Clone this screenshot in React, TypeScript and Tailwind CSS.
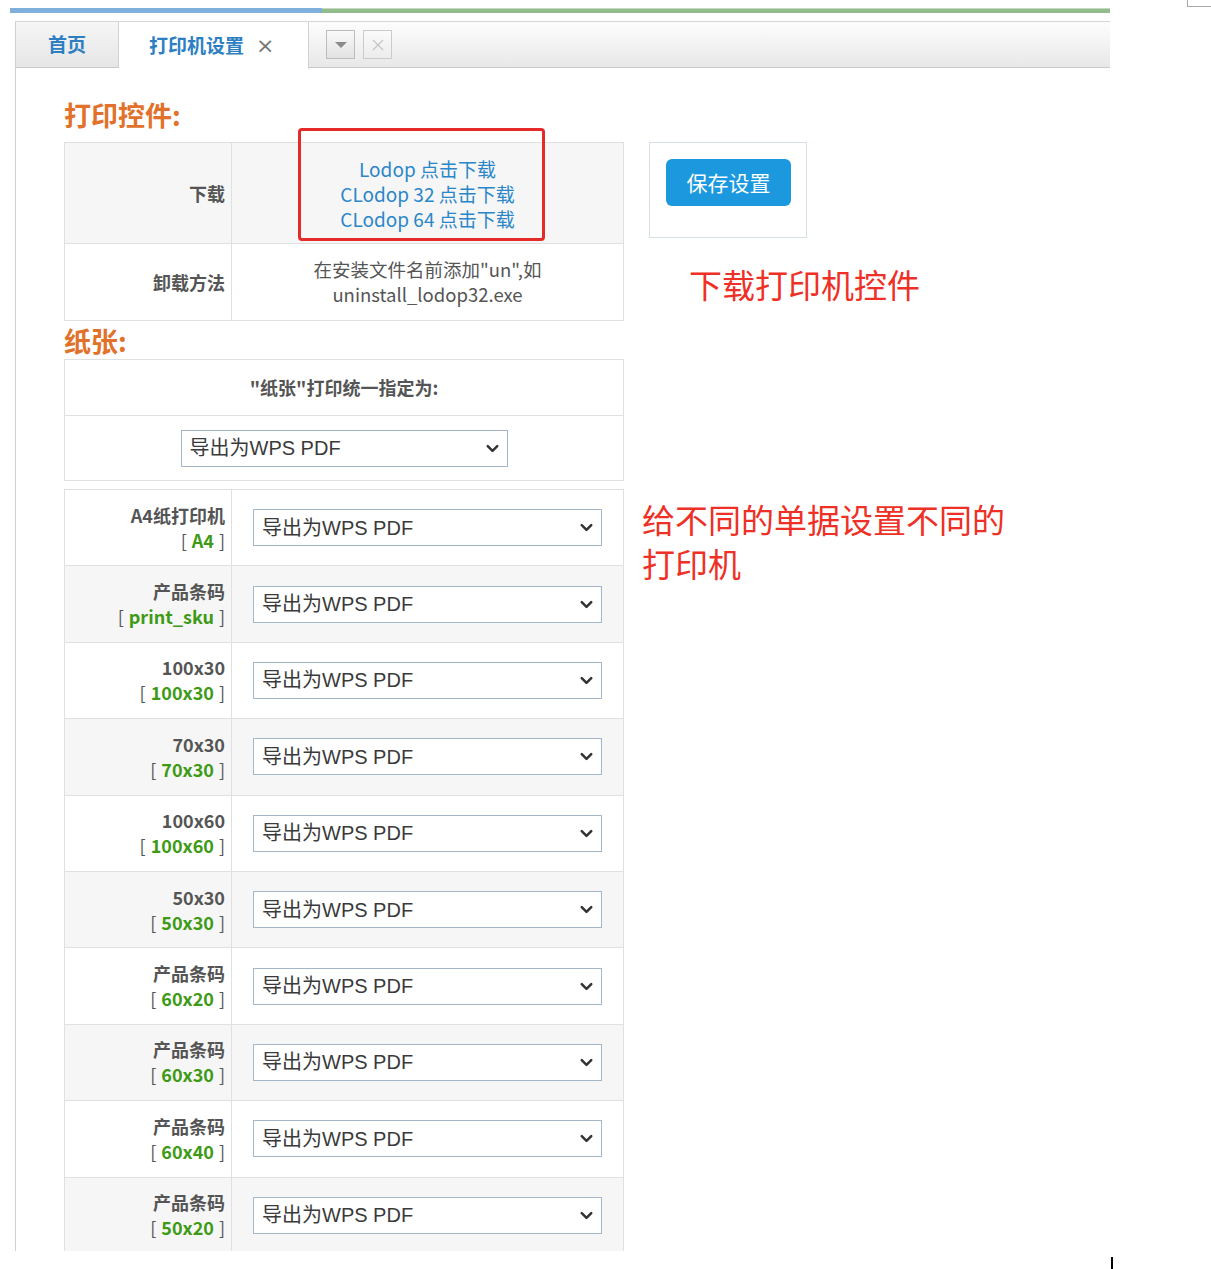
import React from "react";
import { ChevronDown } from "lucide-react";

interface PrinterRow {
  name: string;
  code: string;
}

const printerRows: PrinterRow[] = [
  { name: "A4纸打印机", code: "A4" },
  { name: "产品条码", code: "print_sku" },
  { name: "100x30", code: "100x30" },
  { name: "70x30", code: "70x30" },
  { name: "100x60", code: "100x60" },
  { name: "50x30", code: "50x30" },
  { name: "产品条码", code: "60x20" },
  { name: "产品条码", code: "60x30" },
  { name: "产品条码", code: "60x40" },
  { name: "产品条码", code: "50x20" },
];

const cjk = "font-['Noto_Sans_CJK_SC','Noto_Sans',sans-serif]";

function PrinterSelect({ width }: { width: string }) {
  return (
    <div className={`relative h-[37px] ${width}`}>
      <select
        defaultValue="wps"
        className="w-full h-full appearance-none bg-white border border-[#a3b6ca] pl-[8px] pr-[30px] text-[20px] text-[#3a3a3a] font-['Liberation_Sans','Noto_Sans_CJK_SC',sans-serif] outline-none"
      >
        <option value="wps">导出为WPS PDF</option>
        <option value="ms">Microsoft Print to PDF</option>
      </select>
      <ChevronDown
        className="absolute right-[6px] top-[9px] w-[19px] h-[19px] text-[#333] pointer-events-none"
        strokeWidth={3.2}
      />
    </div>
  );
}

export default function App() {
  return (
    <div className={`relative w-[1211px] h-[1269px] overflow-hidden bg-white ${cjk}`}>
      {/* corner bits */}
      <div className="absolute top-0 left-[1187px] w-[24px] h-[7px] border-l border-b border-[#a8a8a8]" />
      <div className="absolute top-[1257px] left-[1111px] w-[2px] h-[12px] bg-black" />

      {/* top colour bar */}
      <div className="flex ml-[10px] mt-[8px] w-[1100px] h-[5px]">
        <div className="w-[312px] bg-[#7fb0dc]" />
        <div className="flex-1 bg-[#93bb8b] border-t border-[#c3dbbd]" />
      </div>

      {/* tab strip */}
      <div className="ml-[15px] mt-[8px] w-[1095px] h-[47px] flex border-t border-b border-l border-t-[#d6d6d6] border-b-[#c9c9c9] border-l-[#d0d0d0] bg-gradient-to-b from-[#fdfdfd] to-[#e8e8e8]">
        <div className="w-[103px] flex items-center justify-center border-r border-[#d2d2d2] bg-gradient-to-b from-[#f6f6f6] to-[#e6e6e6] text-[19px] font-bold text-[#2c80c2]">
          首页
        </div>
        <div className="w-[190px] h-[47px] flex items-center pl-[30px] bg-white border-r border-[#d2d2d2] text-[19px] font-bold text-[#2c80c2]">
          打印机设置
          <span className="ml-[12px] text-[22px] font-normal text-[#777] font-['DejaVu_Sans',sans-serif]">×</span>
        </div>
        <div className="flex items-center gap-[8px] pl-[17px]">
          <div className="w-[29px] h-[29px] border border-[#bdbdbd] bg-gradient-to-b from-[#fafafa] to-[#e2e2e2] flex items-center justify-center">
            <div className="w-0 h-0 border-l-[6px] border-r-[6px] border-t-[6px] border-l-transparent border-r-transparent border-t-[#8a8a8a]" />
          </div>
          <div className="w-[29px] h-[29px] border border-[#cbcbcb] bg-gradient-to-b from-[#fbfbfb] to-[#ececec] flex items-center justify-center">
            <svg width="14" height="14" viewBox="0 0 14 14">
              <path d="M2 2 L12 12 M12 2 L2 12" stroke="#c4c4c4" strokeWidth="1.2" />
            </svg>
          </div>
        </div>
      </div>

      {/* content */}
      <div className="ml-[15px] w-[1095px] h-[1183px] border-l border-[#d0d0d0] overflow-hidden pl-[48px]">
        <div className="mt-[27px] h-[40px] leading-[40px] text-[27px] font-bold text-[#e2722b]">打印控件:</div>

        <div className="mt-[7px] flex items-start">
          <div className="relative">
            <table className="w-[560px] border-collapse border border-[#e0e0e0] text-[18px]">
              <tbody>
                <tr className="h-[101px] bg-[#f6f6f6]">
                  <td className="w-[167px] border border-[#e0e0e0] text-right pr-[6px] font-bold text-[#555]">下载</td>
                  <td className="border border-[#e0e0e0] text-center text-[19px] leading-[25px] text-[#2a86c9]">
                    <div>Lodop 点击下载</div>
                    <div>CLodop 32 点击下载</div>
                    <div>CLodop 64 点击下载</div>
                  </td>
                </tr>
                <tr className="h-[77px] bg-white">
                  <td className="border border-[#e0e0e0] text-right pr-[6px] font-bold text-[#555]">卸载方法</td>
                  <td className="border border-[#e0e0e0] text-center text-[18.5px] leading-[25px] text-[#555]">
                    <div>在安装文件名前添加"un",如</div>
                    <div>uninstall_lodop32.exe</div>
                  </td>
                </tr>
              </tbody>
            </table>
            <div className="absolute left-[234px] top-[-14px] w-[247px] h-[113px] border-[3px] border-[#e52a2a] rounded-[4px]" />
          </div>

          <div className="ml-[25px]">
            <div className="w-[158px] h-[96px] border border-[#d5dfe9] pl-[16px] pt-[16px]">
              <button className="w-[125px] h-[47px] rounded-[6px] bg-[#1b98de] text-white text-[21px]">保存设置</button>
            </div>
            <div className="mt-[26px] ml-[40px] h-[40px] leading-[40px] text-[33px] text-[#ee3026] whitespace-nowrap">
              下载打印机控件
            </div>
          </div>
        </div>

        <div className="mt-[2px] h-[36px] leading-[36px] text-[27px] font-bold text-[#e2722b]">纸张:</div>

        <table className="w-[560px] border-collapse border border-[#e0e0e0]">
          <tbody>
            <tr className="h-[56px]">
              <td className="border border-[#e0e0e0] text-center text-[18px] font-bold text-[#555]">"纸张"打印统一指定为:</td>
            </tr>
            <tr className="h-[65px]">
              <td className="border border-[#e0e0e0]">
                <div className="flex justify-center">
                  <PrinterSelect width="w-[327px]" />
                </div>
              </td>
            </tr>
          </tbody>
        </table>

        <div className="mt-[8px] flex items-start">
          <table className="w-[560px] border-collapse border border-[#e0e0e0]">
            <tbody>
              {printerRows.map((row, i) => (
                <tr key={i} className={`h-[76.4px] ${i % 2 === 1 ? "bg-[#f6f6f6]" : "bg-white"}`}>
                  <td className="w-[167px] border border-[#e0e0e0] text-right pr-[6px] text-[18px] leading-[25px]">
                    <div className="font-bold text-[#555]">{row.name}</div>
                    <div className="text-[#555]">
                      [<span className="px-[5px] font-bold text-[#3d9a14]">{row.code}</span>]
                    </div>
                  </td>
                  <td className="border border-[#e0e0e0] px-[21px]">
                    <PrinterSelect width="w-full" />
                  </td>
                </tr>
              ))}
            </tbody>
          </table>
          <div className="ml-[18px] mt-[8px] w-[380px] text-[33px] leading-[44px] text-[#ee3026]">
            给不同的单据设置不同的打印机
          </div>
        </div>
      </div>
    </div>
  );
}
